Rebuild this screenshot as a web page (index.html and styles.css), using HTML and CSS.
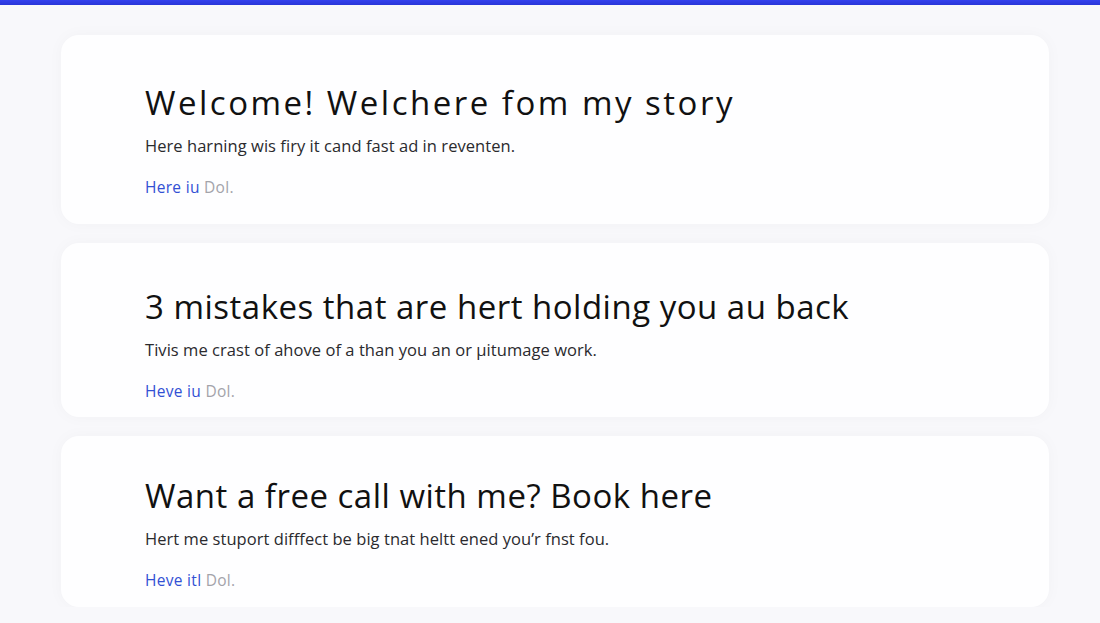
FILE: index.html
```html
<!DOCTYPE html>
<html lang="en">
<head>
    <meta charset="UTF-8">
    <meta name="viewport" content="width=device-width, initial-scale=1.0">
    <title>My Story</title>
    <link rel="stylesheet" href="styles.css">
</head>
<body>
    <div class="top-bar"></div>

    <main class="feed">
        <section class="card card-first">
            <h2>Welcome! Welchere fom my story</h2>
            <p>Here harning wis firy it cand fast ad in reventen.</p>
            <a class="more" href="#">Here iu <span>Dol.</span></a>
        </section>

        <section class="card">
            <h2>3 mistakes that are hert holding you au back</h2>
            <p>Tivis me crast of ahove of a than you an or µitumage work.</p>
            <a class="more" href="#">Heve iu <span>Dol.</span></a>
        </section>

        <section class="card card-last">
            <h2>Want a free call with me? Book here</h2>
            <p>Hert me stuport difffect be big tnat heltt ened you’r fnst fou.</p>
            <a class="more" href="#">Heve itl <span>Dol.</span></a>
        </section>
    </main>
</body>
</html>
```

FILE: styles.css
```css
body {
    margin: 0;
    font-family: "Open Sans", "Lato", sans-serif;
    background-color: #f8f8fb;
    color: #111;
}

.top-bar {
    height: 5px;
    background: linear-gradient(to bottom, #3442ee, #2a36d8);
}

.feed {
    width: 988px;
    margin: 30px 0 0 61px;
    display: flex;
    flex-direction: column;
    gap: 19px;
}

.card {
    background: #fefeff;
    border-radius: 18px;
    padding: 44px 84px 14px;
    box-shadow: 0 0 16px rgba(30, 30, 60, 0.03);
}

.card-first {
    padding-top: 48px;
    padding-bottom: 25px;
}

.card-last {
    padding-top: 40px;
    padding-bottom: 15px;
}

.card h2 {
    margin: 0 0 11px;
    font-size: 33px;
    line-height: 40px;
    font-weight: 400;
    letter-spacing: 0.5px;
    color: #111;
}

/* the welcome heading runs a little wider */
.card-first h2 {
    letter-spacing: 2.5px;
}

.card p {
    margin: 0 0 17px;
    font-size: 16.5px;
    line-height: 24px;
    letter-spacing: 0.05px;
    color: #2a2a2e;
}

.more {
    display: block;
    font-size: 15.5px;
    line-height: 24px;
    letter-spacing: 0.3px;
    color: #3250d4;
    text-decoration: none;
}

.more span {
    color: #a3a3aa;
}
```
